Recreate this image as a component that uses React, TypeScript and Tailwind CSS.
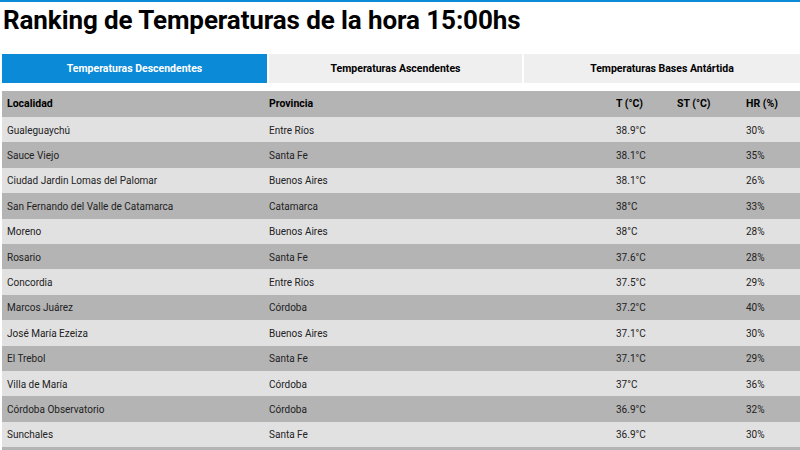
import React from "react";

interface Row {
    localidad: string;
    provincia: string;
    t: string;
    st: string;
    hr: string;
}

const rows: Row[] = [
    { localidad: "Gualeguaychú", provincia: "Entre Ríos", t: "38.9°C", st: "", hr: "30%" },
    { localidad: "Sauce Viejo", provincia: "Santa Fe", t: "38.1°C", st: "", hr: "35%" },
    { localidad: "Ciudad Jardin Lomas del Palomar", provincia: "Buenos Aires", t: "38.1°C", st: "", hr: "26%" },
    { localidad: "San Fernando del Valle de Catamarca", provincia: "Catamarca", t: "38°C", st: "", hr: "33%" },
    { localidad: "Moreno", provincia: "Buenos Aires", t: "38°C", st: "", hr: "28%" },
    { localidad: "Rosario", provincia: "Santa Fe", t: "37.6°C", st: "", hr: "28%" },
    { localidad: "Concordia", provincia: "Entre Ríos", t: "37.5°C", st: "", hr: "29%" },
    { localidad: "Marcos Juárez", provincia: "Córdoba", t: "37.2°C", st: "", hr: "40%" },
    { localidad: "José María Ezeiza", provincia: "Buenos Aires", t: "37.1°C", st: "", hr: "30%" },
    { localidad: "El Trebol", provincia: "Santa Fe", t: "37.1°C", st: "", hr: "29%" },
    { localidad: "Villa de María", provincia: "Córdoba", t: "37°C", st: "", hr: "36%" },
    { localidad: "Córdoba Observatorio", provincia: "Córdoba", t: "36.9°C", st: "", hr: "32%" },
    { localidad: "Sunchales", provincia: "Santa Fe", t: "36.9°C", st: "", hr: "30%" },
];

const tabs = ["Temperaturas Descendentes", "Temperaturas Ascendentes", "Temperaturas Bases Antártida"];

export default function App() {
    return (
        <div className="w-[800px] h-[450px] overflow-hidden bg-white font-['Roboto',sans-serif] text-[#222]">
            <div className="h-[2px] bg-[#0b8ad8]" />
            <div className="pl-[2px]">
                <h1 className="h-[52px] pl-px pt-[1px] text-[26px] leading-[34px] font-bold text-black tracking-[-0.1px]">
                    Ranking de Temperaturas de la hora 15:00hs
                </h1>

                {/* Tabs */}
                <div className="flex gap-[2px] h-[29px]">
                    {tabs.map((tab, i) => (
                        <div
                            key={tab}
                            className={
                                "flex items-center justify-center text-[10.5px] font-bold " +
                                (i === 0 ? "w-[265px] bg-[#0b8ad8] text-white" : i === 1 ? "w-[253px] bg-[#efefef] text-black" : "flex-1 bg-[#efefef] text-black")
                            }
                        >
                            {tab}
                        </div>
                    ))}
                </div>

                {/* Table */}
                <div className="mt-[8px] text-[10px]">
                    <div className="flex items-center h-[26px] bg-[#b4b4b4] font-bold text-black text-[10.5px]">
                        <div className="w-[262px] pl-[5px]">Localidad</div>
                        <div className="w-[347px] pl-[5px]">Provincia</div>
                        <div className="w-[61px] pl-[5px]">T (°C)</div>
                        <div className="w-[69px] pl-[5px]">ST (°C)</div>
                        <div className="flex-1 pl-[5px]">HR (%)</div>
                    </div>
                    {rows.map((r, i) => (
                        <div
                            key={r.localidad}
                            className={"flex items-center h-[25.4px] pt-px " + (i % 2 === 0 ? "bg-[#e1e1e1]" : "bg-[#b4b4b4]")}
                        >
                            <div className="w-[262px] pl-[5px]">{r.localidad}</div>
                            <div className="w-[347px] pl-[5px]">{r.provincia}</div>
                            <div className="w-[61px] pl-[5px]">{r.t}</div>
                            <div className="w-[69px] pl-[5px]">{r.st}</div>
                            <div className="flex-1 pl-[5px]">{r.hr}</div>
                        </div>
                    ))}
                    <div className="h-[25.4px] bg-[#b4b4b4]" />
                </div>
            </div>
        </div>
    );
}
